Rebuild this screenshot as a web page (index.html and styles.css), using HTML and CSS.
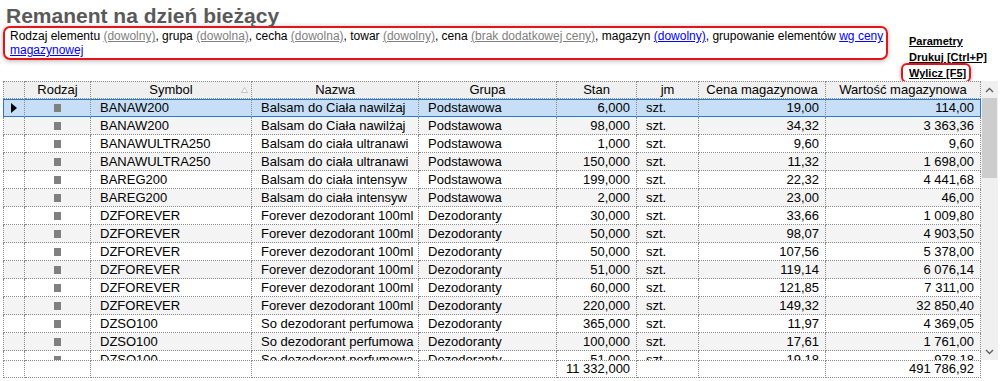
FILE: index.html
```html
<!DOCTYPE html>
<html lang="pl">
<head>
  <meta charset="UTF-8">
  <meta name="viewport" content="width=device-width, initial-scale=1.0">
  <title>Remanent na dzień bieżący</title>
  <link rel="stylesheet" href="styles.css">
</head>
<body>

  <div class="top">
    <div class="left">
      <h1 class="title">Remanent na dzień bieżący</h1>
      <div class="filters">
        <div class="line">Rodzaj elementu <a href="#" class="opt">(dowolny)</a>, grupa <a href="#" class="opt">(dowolna)</a>, cecha <a href="#" class="opt">(dowolna)</a>, towar <a href="#" class="opt">(dowolny)</a>, cena <a href="#" class="opt">(brak dodatkowej ceny)</a>, magazyn <a href="#" class="set">(dowolny)</a>, grupowanie elementów <a href="#" class="set">wg ceny</a></div>
        <div class="line"><a href="#" class="set">magazynowej</a></div>
      </div>
    </div>
    <div class="actions">
      <a href="#">Parametry</a>
      <a href="#">Drukuj [Ctrl+P]</a>
      <a href="#" class="hot">Wylicz [F5]</a>
    </div>
  </div>

  <div class="grid">
    <div class="grid-main">
      <div class="viewport">
        <table>
          <colgroup>
            <col class="c-ind"><col class="c-kind"><col class="c-sym"><col class="c-name"><col class="c-grp">
            <col class="c-qty"><col class="c-unit"><col class="c-price"><col class="c-val">
          </colgroup>
          <thead>
            <tr>
              <th></th>
              <th>Rodzaj</th>
              <th class="sorted">Symbol<span class="sort-mark"><svg width="7" height="6" viewBox="0 0 7 6"><path d="M3.5 0.5 L6.5 5.5 L0.5 5.5 Z" fill="#fff" stroke="#c4c4c4"/></svg></span></th>
              <th>Nazwa</th>
              <th>Grupa</th>
              <th>Stan</th>
              <th>jm</th>
              <th>Cena magazynowa</th>
              <th>Wartość magazynowa</th>
            </tr>
          </thead>
          <tbody>
            <tr class="sel"><td class="ind"><span class="arrow"></span></td><td class="kind"><span class="sq"></span></td><td>BANAW200</td><td>Balsam do Ciała nawilżaj</td><td>Podstawowa</td><td class="num">6,000</td><td>szt.</td><td class="num">19,00</td><td class="num">114,00</td></tr>
            <tr><td class="ind"></td><td class="kind"><span class="sq"></span></td><td>BANAW200</td><td>Balsam do Ciała nawilżaj</td><td>Podstawowa</td><td class="num">98,000</td><td>szt.</td><td class="num">34,32</td><td class="num">3 363,36</td></tr>
            <tr><td class="ind"></td><td class="kind"><span class="sq"></span></td><td>BANAWULTRA250</td><td>Balsam do ciała ultranawi</td><td>Podstawowa</td><td class="num">1,000</td><td>szt.</td><td class="num">9,60</td><td class="num">9,60</td></tr>
            <tr><td class="ind"></td><td class="kind"><span class="sq"></span></td><td>BANAWULTRA250</td><td>Balsam do ciała ultranawi</td><td>Podstawowa</td><td class="num">150,000</td><td>szt.</td><td class="num">11,32</td><td class="num">1 698,00</td></tr>
            <tr><td class="ind"></td><td class="kind"><span class="sq"></span></td><td>BAREG200</td><td>Balsam do ciała intensyw</td><td>Podstawowa</td><td class="num">199,000</td><td>szt.</td><td class="num">22,32</td><td class="num">4 441,68</td></tr>
            <tr><td class="ind"></td><td class="kind"><span class="sq"></span></td><td>BAREG200</td><td>Balsam do ciała intensyw</td><td>Podstawowa</td><td class="num">2,000</td><td>szt.</td><td class="num">23,00</td><td class="num">46,00</td></tr>
            <tr><td class="ind"></td><td class="kind"><span class="sq"></span></td><td>DZFOREVER</td><td>Forever dezodorant 100ml</td><td>Dezodoranty</td><td class="num">30,000</td><td>szt.</td><td class="num">33,66</td><td class="num">1 009,80</td></tr>
            <tr><td class="ind"></td><td class="kind"><span class="sq"></span></td><td>DZFOREVER</td><td>Forever dezodorant 100ml</td><td>Dezodoranty</td><td class="num">50,000</td><td>szt.</td><td class="num">98,07</td><td class="num">4 903,50</td></tr>
            <tr><td class="ind"></td><td class="kind"><span class="sq"></span></td><td>DZFOREVER</td><td>Forever dezodorant 100ml</td><td>Dezodoranty</td><td class="num">50,000</td><td>szt.</td><td class="num">107,56</td><td class="num">5 378,00</td></tr>
            <tr><td class="ind"></td><td class="kind"><span class="sq"></span></td><td>DZFOREVER</td><td>Forever dezodorant 100ml</td><td>Dezodoranty</td><td class="num">51,000</td><td>szt.</td><td class="num">119,14</td><td class="num">6 076,14</td></tr>
            <tr><td class="ind"></td><td class="kind"><span class="sq"></span></td><td>DZFOREVER</td><td>Forever dezodorant 100ml</td><td>Dezodoranty</td><td class="num">60,000</td><td>szt.</td><td class="num">121,85</td><td class="num">7 311,00</td></tr>
            <tr><td class="ind"></td><td class="kind"><span class="sq"></span></td><td>DZFOREVER</td><td>Forever dezodorant 100ml</td><td>Dezodoranty</td><td class="num">220,000</td><td>szt.</td><td class="num">149,32</td><td class="num">32 850,40</td></tr>
            <tr><td class="ind"></td><td class="kind"><span class="sq"></span></td><td>DZSO100</td><td>So dezodorant perfumowa</td><td>Dezodoranty</td><td class="num">365,000</td><td>szt.</td><td class="num">11,97</td><td class="num">4 369,05</td></tr>
            <tr><td class="ind"></td><td class="kind"><span class="sq"></span></td><td>DZSO100</td><td>So dezodorant perfumowa</td><td>Dezodoranty</td><td class="num">100,000</td><td>szt.</td><td class="num">17,61</td><td class="num">1 761,00</td></tr>
            <tr><td class="ind"></td><td class="kind"><span class="sq"></span></td><td>DZSO100</td><td>So dezodorant perfumowa</td><td>Dezodoranty</td><td class="num">51,000</td><td>szt.</td><td class="num">19,18</td><td class="num">978,18</td></tr>
          </tbody>
        </table>
      </div>
      <div class="vscroll">
        <div class="sbtn"><svg width="9" height="6" viewBox="0 0 9 6"><path d="M1 5 L4.5 1.5 L8 5" fill="none" stroke="#606060" stroke-width="1.4"/></svg></div>
        <div class="thumb"></div>
        <div class="track"></div>
        <div class="sbtn"><svg width="9" height="6" viewBox="0 0 9 6"><path d="M1 1 L4.5 4.5 L8 1" fill="none" stroke="#606060" stroke-width="1.4"/></svg></div>
      </div>
    </div>

    <table class="foot">
      <colgroup>
        <col class="c-ind"><col class="c-kind"><col class="c-sym"><col class="c-name"><col class="c-grp">
        <col class="c-qty"><col class="c-unit"><col class="c-price"><col class="c-val">
      </colgroup>
      <tr><td class="ind"></td><td></td><td></td><td></td><td></td><td class="num">11 332,000</td><td></td><td></td><td class="num">491 786,92</td></tr>
    </table>
  </div>

</body>
</html>
```

FILE: styles.css
```css
body {
  font-family: "Liberation Sans", Arial, sans-serif;
  margin: 0;
  background: #fff;
  color: #000;
}
.top {
  display: flex;
  height: 81px;
}
.left {
  margin-left: 3px;
  width: 885px;
}
.title {
  margin: 5px 0 0 3px;
  font-size: 21px;
  line-height: 21px;
  font-weight: bold;
  color: #595959;
}
.filters {
  box-sizing: border-box;
  height: 34px;
  border: 2px solid #e5141b;
  border-radius: 7px;
  box-shadow: 0 1px 5px rgba(0, 0, 0, 0.3);
  padding: 1px 2px 0 5px;
  font-size: 12px;
  line-height: 14px;
}
.filters .line {
  white-space: nowrap;
}
.filters a.opt {
  color: #808080;
}
.filters a.set {
  color: #0000ff;
}
.actions {
  margin-left: 13px;
  padding-top: 33px;
  font-size: 11px;
  line-height: 16px;
  font-weight: bold;
}
.actions a {
  display: block;
  width: max-content;
  margin-left: 8px;
  color: #000;
}
.actions a.hot {
  margin: -2px 0 0 0;
  padding: 0 3px 0 6px;
  border: 2px solid #e5141b;
  border-radius: 6px;
  box-shadow: 0 1px 4px rgba(0, 0, 0, 0.3);
}

/* grid */
.grid {
  margin-left: 3px;
  width: 995px;
}
.grid-main {
  display: flex;
  height: 279px;
}
.viewport {
  width: 978px;
  overflow: hidden;
}
table {
  border-collapse: separate;
  border-spacing: 0;
  table-layout: fixed;
  width: 978px;
  font-size: 13px;
}
.c-ind { width: 22px; }
.c-kind { width: 66px; }
.c-sym { width: 161px; }
.c-name { width: 167px; }
.c-grp { width: 138px; }
.c-qty { width: 80px; }
.c-unit { width: 62px; }
.c-price { width: 127px; }
.c-val { width: 155px; }
th, td {
  padding: 0 6px 0 9px;
  border-right: 1px dotted #8a8a8a;
  border-bottom: 1px dotted #8a8a8a;
  white-space: nowrap;
  overflow: hidden;
  line-height: 16px;
  text-align: left;
}
th:first-child, td:first-child {
  border-left: 1px dotted #8a8a8a;
}
thead tr {
  height: 17px;
}
th {
  border-top: 1px dotted #8a8a8a;
  background: #f0f0f0;
  font-weight: normal;
  text-align: center;
  padding: 0;
}
th.sorted {
  position: relative;
}
.sort-mark {
  position: absolute;
  right: 3px;
  top: 5px;
  line-height: 0;
}
tbody tr {
  height: 18px;
}
tbody tr:nth-child(even) td {
  background: #f4f4f4;
}
td.num {
  text-align: right;
}
td.ind, td.kind {
  padding: 0;
  text-align: center;
}
.arrow {
  display: inline-block;
  vertical-align: middle;
  border-left: 6px solid #000;
  border-top: 5px solid transparent;
  border-bottom: 5px solid transparent;
}
.sq {
  display: inline-block;
  vertical-align: middle;
  width: 7px;
  height: 8px;
  background: #808080;
}
tr.sel td {
  background: #c6dff6;
  box-shadow: inset 0 1px 0 #2678d0;
  border-bottom: 1px solid #2678d0;
}
tr.sel td:first-child {
  border-left: 1px solid #2678d0;
}
tr.sel td:last-child {
  border-right: 1px solid #2678d0;
}
.vscroll {
  width: 17px;
  background: #f0f0f0;
  display: flex;
  flex-direction: column;
}
.sbtn {
  height: 17px;
  display: flex;
  align-items: center;
  justify-content: center;
}
.thumb {
  margin-left: 1px;
  width: 15px;
  height: 80px;
  background: #cdcdcd;
}
.track {
  flex: 1;
}
.foot tr {
  height: 18px;
}
.foot td {
  border-top: 1px dotted #8a8a8a;
}
```
